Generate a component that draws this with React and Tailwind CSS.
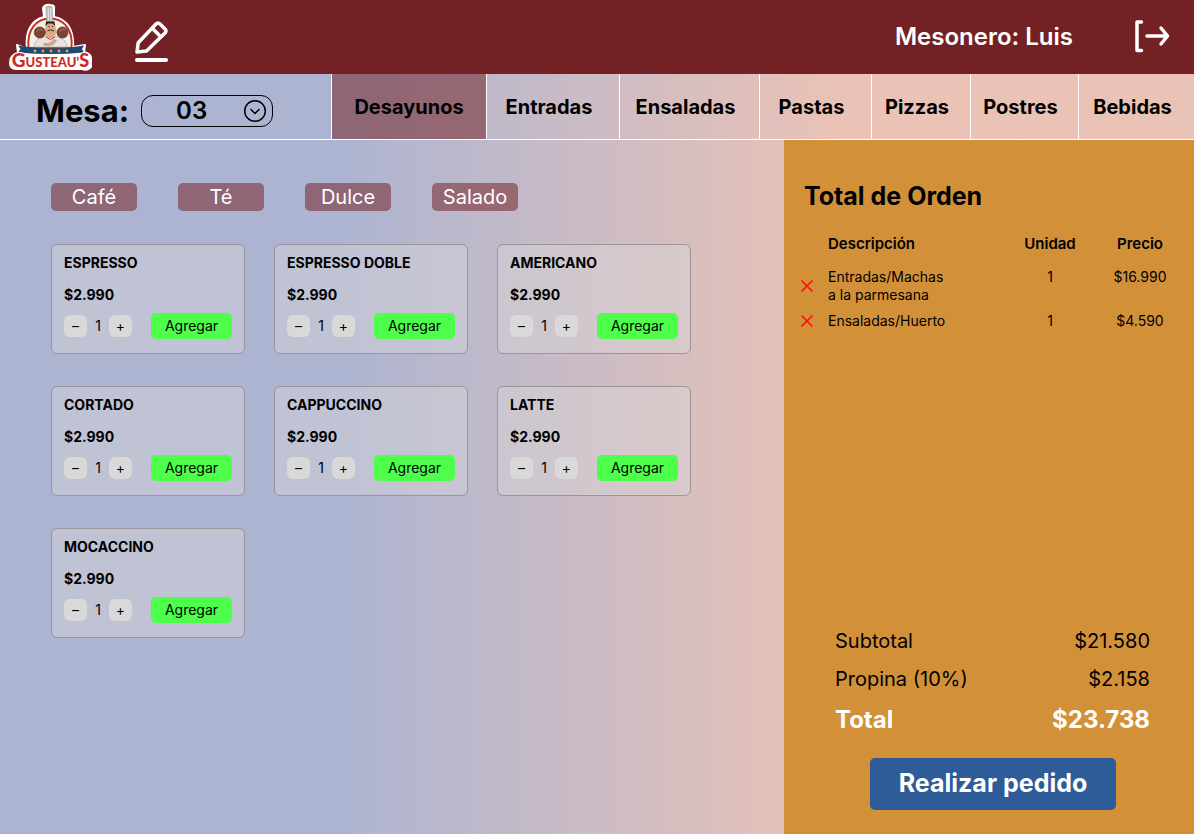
import React, { useState } from "react";

const tabs = ["Desayunos", "Entradas", "Ensaladas", "Pastas", "Pizzas", "Postres", "Bebidas"];
const filters = ["Café", "Té", "Dulce", "Salado"];
const products = ["ESPRESSO", "ESPRESSO DOBLE", "AMERICANO", "CORTADO", "CAPPUCCINO", "LATTE", "MOCACCINO"];
const order = [
  { name: "Entradas/Machas a la parmesana", units: 1, price: "$16.990" },
  { name: "Ensaladas/Huerto", units: 1, price: "$4.590" },
];

function Logo() {
  const badge =
    "M27 49 C25 32 31 20 44 17 L43 8 Q45 4 50 5 Q55 5 54 9 L54 17 C68 19 74 32 73 47 L85 45 L84 52 Q91 54 91 58 L91 67 Q88 71 82 69 L16 69 Q10 69 10 63 Q10 55 18 53 L17 45 Z";
  return (
    <svg viewBox="8 3 85 69" className="h-[69px] w-[85px]" role="img" aria-label="Gusteau's">
      <path d={badge} fill="#fff" stroke="#fff" strokeWidth="2" strokeLinejoin="round" />
      <path d="M28.500 48 C26.500 29 37 18.500 50 18.500 C63 18.500 73.500 29 71.500 48 Z" fill="#f3f0e8" stroke="#c4302b" strokeWidth="2" />
      <path d="M34 47 C34 41 39 37.500 45 36.500 L56 36.500 C62 37.500 67 41 67 47 Z" fill="#e6e3e0" stroke="#aaa49e" strokeWidth=".6" />
      <path d="M46 7 Q49 5 52 7 L53 22 L46.500 22 Z" fill="#bdbbb9" stroke="#8e8a88" strokeWidth=".5" />
      <path d="M48.300 8 V21 M50.800 8 V21" stroke="#ecebea" strokeWidth=".9" />
      <path d="M46 22 Q50 20 54.500 22 L56.500 32 Q55 38 50.500 38 Q45.500 38 45 32 Z" fill="#dfa984" />
      <path d="M45.500 26 L46 21.500 H54.500 L55 26 L52.500 23.500 H48 Z" fill="#2b201d" />
      <path d="M47.500 31 Q50.500 28.500 54 31" stroke="#3a2622" strokeWidth="1" fill="none" />
      <path d="M48.500 26.500 h1 M52 26.500 h1" stroke="#2b201d" strokeWidth="1" />
      <path d="M46 37 L50.500 39.500 L55 37" stroke="#c4302b" strokeWidth="1" fill="none" />
      <circle cx="39.800" cy="32.500" r="5.500" fill="#7d4433" stroke="#54281e" strokeWidth=".7" />
      <circle cx="62.500" cy="32.500" r="5.500" fill="#7d4433" stroke="#54281e" strokeWidth=".7" />
      <path d="M36.500 31.500 q3 -3.500 6 -1.500 M59.500 31.500 q3 -3.500 6 -1.500" stroke="#a66b51" strokeWidth="1.200" fill="none" />
      <path d="M44 43 q4 2 7 -1 l3 -2.500 l2.500 1 l-2.500 3.500 q-5 2.500 -10 1 Z" fill="#dfa984" stroke="#8e766a" strokeWidth=".4" />
      <path d="M18 45.500 Q51 51.500 84 45.500 L82 49 L84 52.500 Q51 55.500 18 52.500 L20.500 49 Z" fill="#214a70" />
      <g fill="#e7b65c">
        {[35, 43, 51, 59, 67].map((x) => (
          <path key={x} d={`M${x} 49 l.6 1.200 1.300 .2 -1 .9 .3 1.300 -1.200 -.6 -1.200 .6 .3 -1.300 -1 -.9 1.300 -.2 Z`} />
        ))}
      </g>
      <g fontFamily="Lato, sans-serif" fontWeight="900" fill="#cf2a27" stroke="#fff" strokeWidth="2" paintOrder="stroke" textAnchor="middle">
        <text x="50.500" y="67">
          <tspan fontSize="19">G</tspan>
          <tspan fontSize="13">USTEAU’</tspan>
          <tspan fontSize="18">S</tspan>
        </text>
      </g>
    </svg>
  );
}

function Header() {
  return (
    <header className="flex h-[74px] items-center bg-[#732124] pr-6 pl-2 text-white">
      <Logo />
      <button type="button" aria-label="Editar" className="mt-2 ml-10">
        <svg viewBox="133 18 37 45" className="h-[45px] w-[37px]" fill="none" stroke="currentColor" strokeWidth="3.500" strokeLinecap="round" strokeLinejoin="round">
          <path d="M137 51 L138.200 41.800 L156 23 Q158 21 160 23 L165 28 Q167 30 165 32 L146.500 50 Z M152.500 27.500 L160.500 35.500" />
          <path d="M137 59 H166" strokeWidth="4" />
        </svg>
      </button>
      <p className="ml-auto text-2xl font-semibold">Mesonero: Luis</p>
      <button type="button" aria-label="Salir" className="ml-[60px]">
        <svg viewBox="1133 18 37 36" className="h-9 w-[37px]" fill="none" stroke="currentColor" strokeWidth="3.500" strokeLinecap="round" strokeLinejoin="round">
          <path d="M1141.500 21 H1137 V49.500 H1141.500" />
          <path d="M1147 35 H1167 M1161 27 L1167.500 35 L1161 43" />
        </svg>
      </button>
    </header>
  );
}

function TableBar() {
  return (
    <div className="flex items-center gap-3 pt-2 pl-9">
      <label htmlFor="mesa" className="text-[31px] leading-10 font-bold">Mesa:</label>
      <div className="relative">
        <select id="mesa" defaultValue="03" className="h-8 w-[132px] appearance-none rounded-xl border border-black bg-transparent pl-[34px] text-2xl leading-7 font-semibold">
          <option>01</option>
          <option>02</option>
          <option>03</option>
          <option>04</option>
        </select>
        <svg viewBox="0 0 24 24" className="pointer-events-none absolute top-1 right-[6px] size-6" fill="none" stroke="black" strokeWidth="1.500" strokeLinecap="round" strokeLinejoin="round">
          <circle cx="12" cy="12" r="10.300" />
          <path d="M8 10.500 L12 14.500 L16 10.500" />
        </svg>
      </div>
    </div>
  );
}

function ProductCard({ name }) {
  const [count, setCount] = useState(1);
  return (
    <article className="h-[110px] rounded-md border border-[#9b9499] bg-[#d9d9d9]/42 px-3 pt-2 text-sm">
      <h2 className="leading-5 font-bold">{name}</h2>
      <p className="mt-3 leading-5 font-bold">$2.990</p>
      <div className="mt-2 flex items-center">
        <button type="button" aria-label="Quitar uno" onClick={() => setCount(Math.max(1, count - 1))} className="h-[22px] w-[23px] rounded-md bg-[#d9d9d9] leading-5">–</button>
        <span className="w-[22px] text-center">{count}</span>
        <button type="button" aria-label="Sumar uno" onClick={() => setCount(count + 1)} className="h-[22px] w-[23px] rounded-md bg-[#d9d9d9] leading-5">+</button>
        <button type="button" className="ml-auto h-[26px] w-[81px] rounded-[5px] bg-[#4dff4a]">Agregar</button>
      </div>
    </article>
  );
}

function OrderPanel() {
  return (
    <aside className="flex w-[410px] shrink-0 flex-col bg-[#d29139] pb-6">
      <h2 className="mt-10 pl-5 text-[25px] leading-8 font-bold">Total de Orden</h2>
      <table className="mt-3 ml-4 w-[376px] table-fixed text-sm leading-[18px]">
        <colgroup>
          <col className="w-7" />
          <col />
          <col className="w-[108px]" />
          <col className="w-[72px]" />
        </colgroup>
        <thead>
          <tr className="h-10 text-[15px]">
            <td />
            <th className="text-left font-semibold">Descripción</th>
            <th className="font-semibold">Unidad</th>
            <th className="font-semibold">Precio</th>
          </tr>
        </thead>
        <tbody>
          {order.map((item) => (
            <tr key={item.name}>
              <td className="align-middle">
                <button type="button" aria-label={`Quitar ${item.name}`} className="block">
                  <svg viewBox="0 0 14 14" className="size-[14px]" stroke="#ff1010" strokeWidth="1.700" strokeLinecap="round">
                    <path d="M2 2 L12 12 M12 2 L2 12" />
                  </svg>
                </button>
              </td>
              <td className="py-1 pr-11 align-top">{item.name}</td>
              <td className="py-1 text-center align-top">{item.units}</td>
              <td className="py-1 text-center align-top">{item.price}</td>
            </tr>
          ))}
        </tbody>
      </table>
      <dl className="mt-auto mr-11 ml-[51px] grid grid-cols-[1fr_auto] items-center gap-y-2 text-right text-xl leading-[30px]">
        <dt className="text-left">Subtotal</dt>
        <dd>$21.580</dd>
        <dt className="text-left">Propina (10%)</dt>
        <dd>$2.158</dd>
        <dt className="text-left text-2xl leading-9 font-bold text-white">Total</dt>
        <dd className="text-2xl leading-9 font-bold text-white">$23.738</dd>
      </dl>
      <button type="button" className="mt-5 ml-[86px] h-[52px] w-[246px] rounded-[5px] bg-[#2e5c99] text-[25px] font-bold text-white">
        Realizar pedido
      </button>
    </aside>
  );
}

export default function App() {
  return (
    <div className="flex min-h-screen flex-col bg-linear-to-r from-[#adb4d1] from-29% to-[#eac2b6] to-70% font-[Inter,sans-serif] text-black">
      <Header />
      <nav className="grid h-[66px] grid-cols-[331fr_155fr_133fr_140fr_112fr_99fr_108fr_116fr] border-b border-white">
        <TableBar />
        {tabs.map((tab, i) => (
          <button
            key={tab}
            type="button"
            aria-current={i === 0 ? "page" : undefined}
            className={
              i === 0
                ? "border-l border-white bg-[#732124]/53 text-xl font-bold"
                : "border-l border-white pr-2 text-xl font-bold"
            }
          >
            {tab}
          </button>
        ))}
      </nav>
      <div className="flex flex-1">
        <main className="min-w-0 flex-1 pt-[43px] pl-[51px]">
          <div className="flex flex-wrap gap-[41px]">
            {filters.map((filter) => (
              <button key={filter} type="button" className="h-7 w-[86px] rounded-[5px] bg-[#732124]/53 text-xl leading-7 text-white">
                {filter}
              </button>
            ))}
          </div>
          <div className="mt-[33px] grid grid-cols-[repeat(auto-fill,194px)] gap-x-[29px] gap-y-8">
            {products.map((name) => (
              <ProductCard key={name} name={name} />
            ))}
          </div>
        </main>
        <OrderPanel />
      </div>
    </div>
  );
}
